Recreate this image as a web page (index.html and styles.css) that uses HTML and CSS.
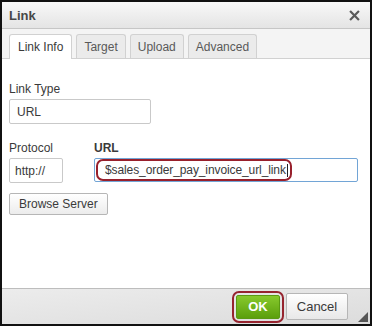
FILE: index.html
```html
<!DOCTYPE html>
<html lang="en">
<head>
  <meta charset="UTF-8">
  <title>Link</title>
  <link rel="stylesheet" href="styles.css">
</head>
<body>
  <div class="dialog">
    <div class="title-bar">
      <span class="title">Link</span>
      <svg class="close" width="11" height="11" viewBox="0 0 12 12">
        <path d="M2 2 L10 10 M10 2 L2 10" stroke="#5a5a5a" stroke-width="2.4" stroke-linecap="square"/>
      </svg>
    </div>

    <div class="tabs">
      <div class="tab active">Link Info</div>
      <div class="tab">Target</div>
      <div class="tab">Upload</div>
      <div class="tab">Advanced</div>
    </div>

    <div class="content">
      <div class="form-group">
        <label>Link Type</label>
        <div class="select">URL</div>
      </div>

      <div class="row">
        <div class="form-group">
          <label>Protocol</label>
          <div class="select small">http://</div>
        </div>
        <div class="form-group grow">
          <label class="bold">URL</label>
          <div class="url-input">
            <span class="highlight">$sales_order_pay_invoice_url_link<span class="caret"></span></span>
          </div>
        </div>
      </div>

      <button class="browse">Browse Server</button>
    </div>

    <div class="footer">
      <span class="ok-ring"><button class="ok">OK</button></span>
      <button class="cancel">Cancel</button>
      <span class="grip"></span>
    </div>
  </div>
</body>
</html>
```

FILE: styles.css
```css
* {
  margin: 0;
  padding: 0;
  box-sizing: border-box;
}

body {
  font-family: "Liberation Sans", Arial, sans-serif;
  font-size: 12px;
  color: #3a3a3a;
  background: #111;
}

.dialog {
  width: 372px;
  height: 326px;
  border: 2px solid #111;
  background: #fff;
  display: flex;
  flex-direction: column;
}

.title-bar {
  height: 27px;
  display: flex;
  align-items: center;
  justify-content: space-between;
  padding: 0 10px 0 7px;
  background: linear-gradient(#f8f8f8, #e4e4e4);
  border-bottom: 1px solid #c6c6c6;
}

.title {
  font-weight: bold;
  font-size: 13px;
  color: #474747;
}

.tabs {
  height: 30px;
  display: flex;
  align-items: flex-end;
  gap: 4px;
  padding-left: 7px;
  background: #f4f4f4;
  border-bottom: 1px solid #d1d1d1;
}

.tab {
  height: 24px;
  padding: 0 7px;
  line-height: 24px;
  font-size: 12px;
  color: #595959;
  background: #ebebeb;
  border: 1px solid #d1d1d1;
  border-bottom: none;
  border-radius: 3px 3px 0 0;
}

.tab.active {
  background: #fff;
  color: #3a3a3a;
  height: 25px;
  margin-bottom: -1px;
  padding: 0 8px;
}

.content {
  flex: 1;
  padding: 23px 12px 0 7px;
}

.form-group label {
  display: block;
  margin-bottom: 3px;
  height: 14px;
}

label.bold {
  font-weight: bold;
}

.select {
  width: 142px;
  height: 25px;
  border: 1px solid #c9c9c9;
  border-radius: 2px;
  line-height: 24px;
  padding-left: 7px;
}

.select.small {
  width: 54px;
  padding-left: 5px;
}

.row {
  display: flex;
  gap: 31px;
  margin-top: 17px;
}

.grow {
  flex: 1;
}

.url-input {
  height: 24px;
  border: 1px solid #72a5d6;
  border-radius: 2px;
  padding: 0 0 0 1px;
  display: flex;
  align-items: center;
}

.highlight {
  display: inline-flex;
  align-items: center;
  height: 22px;
  padding: 0 2px 0 7px;
  border: 2px solid #98202c;
  border-radius: 7px;
  letter-spacing: -0.1px;
}

.caret {
  display: inline-block;
  width: 1px;
  height: 13px;
  background: #222;
  margin-left: 1px;
}

.browse {
  margin-top: 10px;
  height: 22px;
  padding: 0 9px;
  font-family: inherit;
  font-size: 12px;
  color: #3a3a3a;
  background: linear-gradient(#fff, #ececec);
  border: 1px solid #b6b6b6;
  border-radius: 2px;
}

.footer {
  height: 36px;
  border-top: 1px solid #bdbdbd;
  background: linear-gradient(to bottom right, #ececec, #dcdcdc);
  display: flex;
  align-items: center;
  justify-content: flex-end;
  padding-right: 22px;
  gap: 2px;
  position: relative;
}

.ok-ring {
  display: inline-flex;
  padding: 2px;
  border: 2px solid #96242f;
  border-radius: 7px;
}

.ok {
  width: 44px;
  height: 24px;
  font-family: inherit;
  font-size: 13px;
  font-weight: bold;
  color: #fff;
  background: linear-gradient(#87c92d, #5b9f0c);
  border: 1px solid #5a9a13;
  border-radius: 2px;
}

.cancel {
  width: 62px;
  height: 27px;
  font-family: inherit;
  font-size: 13px;
  color: #3a3a3a;
  background: linear-gradient(#fff, #e8e8e8);
  border: 1px solid #b6b6b6;
  border-radius: 2px;
}

.grip {
  position: absolute;
  right: 2px;
  bottom: 2px;
  width: 0;
  height: 0;
  border-left: 10px solid transparent;
  border-bottom: 10px solid #555;
}
```
